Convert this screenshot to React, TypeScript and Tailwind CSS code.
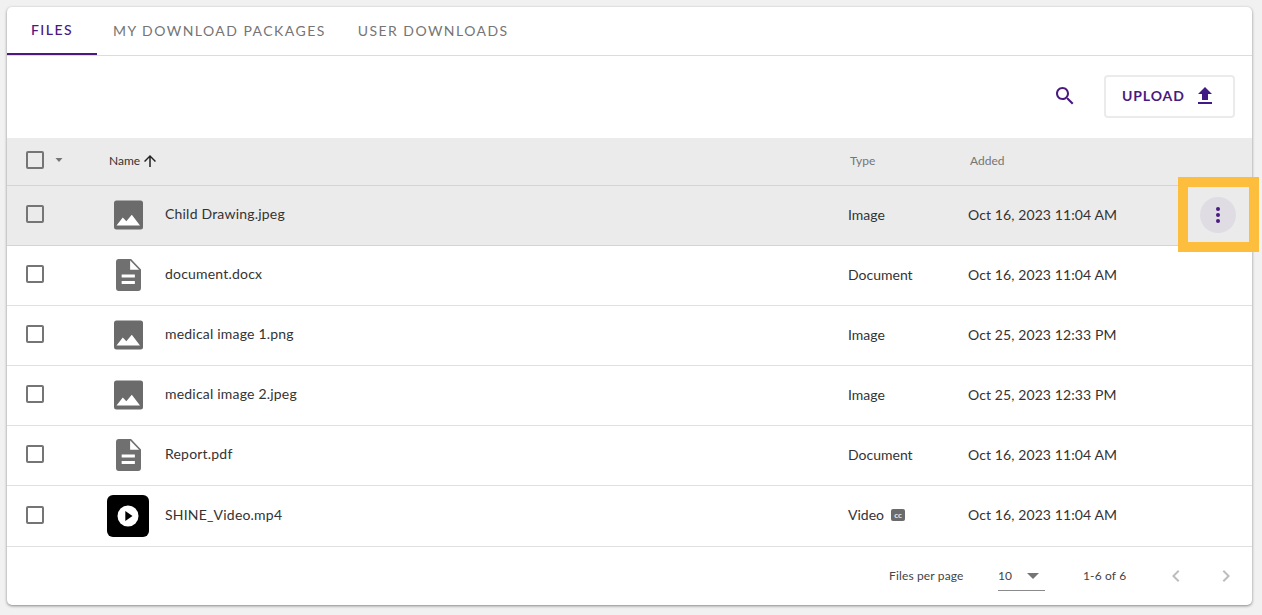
import React from "react";

const font = { fontFamily: 'Lato, "Noto Sans", sans-serif' };

function ImageIcon() {
  return (
    <svg width="30" height="30" viewBox="0 0 30 30" className="block">
      <rect x="1" y="0.5" width="29" height="29" rx="2.5" fill="#6b6b6b" />
      <path d="M3.5 25.5 L9.8 17.5 L13.3 21.3 L18.8 14.8 L27 25.5 Z" fill="#fff" />
    </svg>
  );
}

function DocIcon() {
  return (
    <svg width="25" height="32" viewBox="0.5 0 26.5 32" preserveAspectRatio="none" className="block">
      <path
        d="M3.5 0 H16.5 L27 10.5 V29 a3 3 0 0 1 -3 3 H3.5 a3 3 0 0 1 -3 -3 V3 a3 3 0 0 1 3 -3 Z"
        fill="#707070"
      />
      <path d="M15.5 1.5 V10.8 H25 Z" fill="#fff" />
      <rect x="6.5" y="15.5" width="14" height="3" fill="#fff" />
      <rect x="6.5" y="22" width="14" height="3" fill="#fff" />
    </svg>
  );
}

function VideoThumb() {
  return (
    <div className="w-[42px] h-[42px] rounded-md bg-black flex items-center justify-center">
      <svg width="22" height="22" viewBox="0 0 22 22">
        <circle cx="11" cy="11" r="10.5" fill="#fff" />
        <path d="M8.3 6 L15.5 11 L8.3 16 Z" fill="#000" />
      </svg>
    </div>
  );
}

function Check() {
  return <div className="w-[18px] h-[18px] border-2 border-[#757575] rounded-[2px] shrink-0" />;
}

const rows = [
  { name: "Child Drawing.jpeg", type: "Image", date: "Oct 16, 2023 11:04 AM", icon: "image", active: true },
  { name: "document.docx", type: "Document", date: "Oct 16, 2023 11:04 AM", icon: "doc" },
  { name: "medical image 1.png", type: "Image", date: "Oct 25, 2023 12:33 PM", icon: "image" },
  { name: "medical image 2.jpeg", type: "Image", date: "Oct 25, 2023 12:33 PM", icon: "image" },
  { name: "Report.pdf", type: "Document", date: "Oct 16, 2023 11:04 AM", icon: "doc" },
  { name: "SHINE_Video.mp4", type: "Video", date: "Oct 16, 2023 11:04 AM", icon: "video", cc: true },
];

function Row({ r }: { r: (typeof rows)[number] }) {
  return (
    <div
      className={`relative flex items-center border-b text-[14px] text-[#333] ${
        r.active ? "z-10 bg-[#ebebeb] border-[#d4d4d4]" : "bg-white border-[#e0e0e0]"
      } ${r.cc ? "h-[61px]" : "h-[60px]"}`}
    >
      <div className="w-[100px] pl-[19px] shrink-0 -mt-[3px]">
        <Check />
      </div>
      <div className={`w-[42px] flex items-center justify-center shrink-0 ${r.cc ? "mt-0" : "-mt-[2px]"}`}>
        {r.icon === "image" && <ImageIcon />}
        {r.icon === "doc" && <DocIcon />}
        {r.icon === "video" && <VideoThumb />}
      </div>
      <div className="ml-[16px] w-[683px] shrink-0 -mt-[4px] tracking-[0.2px]">{r.name}</div>
      <div className={`w-[120px] shrink-0 flex items-center gap-[7px] ${r.cc ? "-mt-[4px]" : "-mt-[2px]"}`}>
        {r.type}
        {r.cc && (
          <span className="w-[14px] h-[12px] mt-[1px] rounded-[2px] bg-[#6b6b6b] flex items-center justify-center text-[8px] leading-none font-black text-[#e4e4e4]">
            cc
          </span>
        )}
      </div>
      <div className={`w-[170px] shrink-0 tracking-[0.1px] ${r.cc ? "-mt-[4px]" : "-mt-[2px]"}`}>{r.date}</div>
      {r.active && (
        <div className="absolute left-[1171px] top-[-9px] w-[81px] h-[75px] border-[10px] border-[#fdbe3d] flex items-center justify-center pr-[1px]">
          <div className="w-[36px] h-[36px] rounded-full bg-[#dfdce4] flex flex-col items-center justify-center gap-[2px]">
            <span className="w-[4px] h-[4px] rounded-full bg-[#4a1a80]" />
            <span className="w-[4px] h-[4px] rounded-full bg-[#4a1a80]" />
            <span className="w-[4px] h-[4px] rounded-full bg-[#4a1a80]" />
          </div>
        </div>
      )}
    </div>
  );
}

export default function App() {
  return (
    <div className="h-[615px] bg-[#f1f1f1] pt-[7px] pl-[7px] overflow-hidden" style={font}>
      <div className="w-[1245px] h-[598px] bg-white rounded-[5px] shadow-[0_1px_3px_rgba(0,0,0,0.45)]">
        <div className="flex h-[49px] border-b border-[#dcdcdc] text-[14px] tracking-[1.45px] uppercase text-[#757575]">
          <div className="w-[90px] h-[48px] pb-[1px] flex items-center justify-center text-[#4a1a80] border-b-2 border-[#4a1a80] font-medium">
            Files
          </div>
          <div className="ml-[16px] pb-[2px] flex items-center">My Download Packages</div>
          <div className="ml-[32px] pb-[2px] flex items-center">User Downloads</div>
        </div>

        <div className="flex items-center justify-end h-[82px] pr-[17px]">
          <svg width="24" height="24" viewBox="0 0 24 24" fill="#4a1a80" className="mr-[27px] -mt-[2px]">
            <path d="M15.5 14h-.79l-.28-.27C15.41 12.59 16 11.11 16 9.5 16 5.91 13.09 3 9.5 3S3 5.91 3 9.5 5.91 16 9.5 16c1.61 0 3.09-.59 4.23-1.57l.27.28v.79l5 4.99L20.49 19l-4.99-5zm-6 0C7.01 14 5 11.99 5 9.5S7.01 5 9.5 5 14 7.01 14 9.5 11.99 14 9.5 14z" />
          </svg>
          <div className="w-[131px] h-[43px] -mt-[1px] pl-[16px] pb-[2px] border-2 border-[#ebebeb] rounded flex items-center gap-[8px] text-[14px] font-bold tracking-[0.9px] text-[#4a1a80]">
            UPLOAD
            <svg width="24" height="24" viewBox="0 0 24 24" fill="#3f1a85">
              <path d="M5 20h14v-2H5v2zm0-10h4v6h6v-6h4l-7-7-7 7z" />
            </svg>
          </div>
        </div>

        <div className="flex items-center h-[48px] bg-[#ebebeb] border-b border-[#d4d4d4] text-[12px] text-[#757575]">
          <div className="w-[102px] pl-[19px] shrink-0 flex items-center -mt-[3px]">
            <Check />
            <svg width="10" height="5" viewBox="0 0 10 5" className="ml-[10px]" fill="#757575">
              <path d="M1.5 0 H8.5 L5 4 Z" />
            </svg>
          </div>
          <div className="w-[741px] shrink-0 flex items-center text-[#333] -mt-[1px]">
            Name
            <svg width="18" height="18" viewBox="0 0 24 24" fill="#222" className="ml-[1px]">
              <path d="M4 12l1.41 1.41L11 7.83V20h2V7.83l5.58 5.59L20 12l-8-8-8 8z" />
            </svg>
          </div>
          <div className="w-[120px] shrink-0 -mt-[1px]">Type</div>
          <div className="-mt-[1px]">Added</div>
        </div>

        {rows.map((r) => (
          <Row key={r.name} r={r} />
        ))}

        <div className="flex items-center h-[57px] text-[12px] text-[#444] tracking-[0.15px]">
          <div className="ml-[882px] w-[109px] shrink-0">Files per page</div>
          <div className="w-[47px] h-[30px] mt-[1px] border-b border-[#8a8a8a] flex items-center justify-between pr-[6px] shrink-0">
            10
            <svg width="12" height="6" viewBox="0 0 12 6" fill="#757575">
              <path d="M0 0 H12 L6 6 Z" />
            </svg>
          </div>
          <div className="ml-[38px] w-[43px] shrink-0 whitespace-nowrap">1-6 of 6</div>
          <svg width="24" height="24" viewBox="0 0 24 24" fill="#bdbdbd" className="ml-[38px]">
            <path d="M15.41 7.41 14 6l-6 6 6 6 1.41-1.41L10.83 12z" />
          </svg>
          <svg width="24" height="24" viewBox="0 0 24 24" fill="#bdbdbd" className="ml-[26px]">
            <path d="M10 6 8.59 7.41 13.17 12l-4.58 4.59L10 18l6-6z" />
          </svg>
        </div>
      </div>
    </div>
  );
}
